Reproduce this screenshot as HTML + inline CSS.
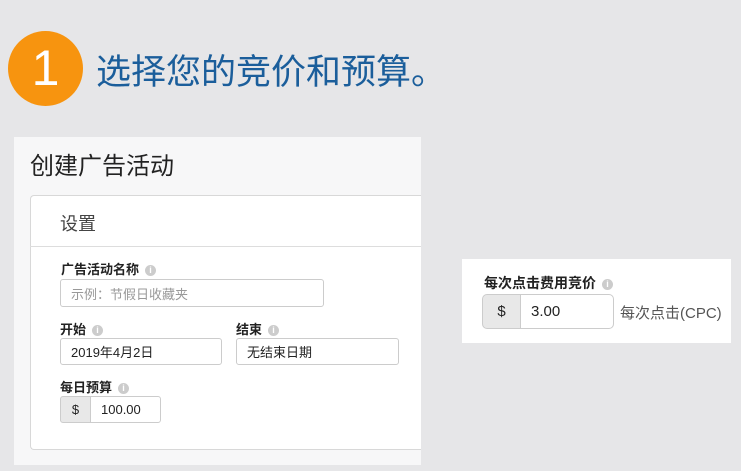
<!DOCTYPE html><html><head><meta charset="utf-8"><style>
*{box-sizing:border-box;margin:0;padding:0}
body{width:741px;height:471px;background:#e6e6e8;position:relative;overflow:hidden;font-family:"Liberation Sans","Noto Sans CJK SC",sans-serif}
.a{position:absolute}
.circ{left:8px;top:31px;width:75px;height:75px;border-radius:50%;background:#f7940f;color:#fff;font-size:50px;text-align:center;line-height:75px}
.title{left:96px;top:44px;font-size:35px;color:#1b5e9b;white-space:nowrap}
.lbl{font-size:13px;font-weight:bold;color:#222;white-space:nowrap}
.i{display:inline-block;width:11px;height:11px;border-radius:50%;background:#ccc;color:#fff;font-size:9px;line-height:11px;text-align:center;margin-left:6px;vertical-align:1px;font-weight:bold}
.in{border:1px solid #ccc;border-radius:3px;background:#fff;font-size:13px;color:#222;padding-left:10px;display:flex;align-items:center}
.ad{background:#e8e8e8;border:1px solid #ccc;border-radius:3px 0 0 3px;display:flex;align-items:center;justify-content:center;font-size:13px;color:#222}
</style></head><body>
<div class="a circ">1</div>
<div class="a title">选择您的竞价和预算。</div>
<div class="a" style="left:14px;top:137px;width:407px;height:328px;background:#f7f7f8"></div>
<div class="a" style="left:30px;top:146px;font-size:24px;color:#222">创建广告活动</div>
<div class="a" style="left:30px;top:195px;width:391px;height:255px;background:#fff;border:1px solid #d8d8d8;border-right:none;border-radius:4px 0 0 4px"></div>
<div class="a" style="left:30px;top:246px;width:391px;height:1px;background:#ddd"></div>
<div class="a" style="left:60px;top:210px;font-size:18px;color:#444">设置</div>
<div class="a lbl" style="left:61px;top:259px">广告活动名称<span class="i">i</span></div>
<div class="a in" style="left:60px;top:279px;width:264px;height:28px;color:#999">示例：节假日收藏夹</div>
<div class="a lbl" style="left:60px;top:319px">开始<span class="i">i</span></div>
<div class="a in" style="left:60px;top:338px;width:162px;height:27px">2019年4月2日</div>
<div class="a lbl" style="left:236px;top:319px">结束<span class="i">i</span></div>
<div class="a in" style="left:236px;top:338px;width:163px;height:27px">无结束日期</div>
<div class="a lbl" style="left:60px;top:377px">每日预算<span class="i">i</span></div>
<div class="a ad" style="left:60px;top:396px;width:31px;height:27px">$</div>
<div class="a in" style="left:90px;top:396px;width:71px;height:27px;border-radius:0 3px 3px 0">100.00</div>
<div class="a" style="left:462px;top:259px;width:269px;height:84px;background:#fff"></div>
<div class="a lbl" style="left:484px;top:273px;font-size:14px">每次点击费用竞价<span class="i">i</span></div>
<div class="a ad" style="left:482px;top:294px;width:39px;height:35px;font-size:15px;border-radius:5px 0 0 5px">$</div>
<div class="a in" style="left:520px;top:294px;width:94px;height:35px;font-size:15px;border-radius:0 5px 5px 0">3.00</div>
<div class="a" style="left:620px;top:302px;font-size:15px;color:#555;white-space:nowrap">每次点击(CPC)</div>
</body></html>
